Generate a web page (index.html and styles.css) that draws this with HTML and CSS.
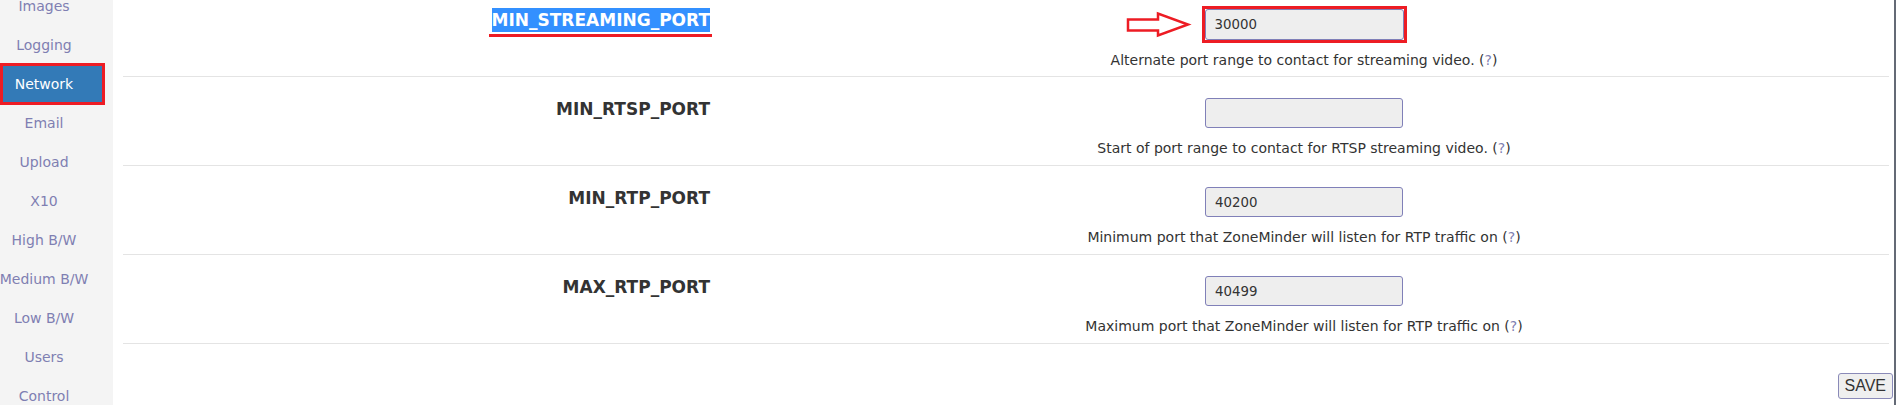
FILE: index.html
```html
<!DOCTYPE html>
<html>
<head>
<meta charset="utf-8">
<link rel="stylesheet" href="styles.css">
</head>
<body>
<div class="page">
  <nav class="sidebar">
    <ul class="nav">
      <li><a>Images</a></li>
      <li><a>Logging</a></li>
      <li><a class="active">Network</a></li>
      <li><a>Email</a></li>
      <li><a>Upload</a></li>
      <li><a>X10</a></li>
      <li><a>High B/W</a></li>
      <li><a>Medium B/W</a></li>
      <li><a>Low B/W</a></li>
      <li><a>Users</a></li>
      <li><a>Control</a></li>
    </ul>
  </nav>
  <main class="content">
    <div class="rows">
      <div class="row">
        <div class="label"><span class="selected">MIN_STREAMING_PORT</span></div>
        <div class="value">
          <div class="field boxed">
            <svg class="arrow" width="68" height="28" viewBox="0 0 68 28"><polygon points="3,9.5 33,9.5 33,3.5 63,14.5 33,25.5 33,20.5 3,20.5" fill="none" stroke="#ed1c24" stroke-width="2.5"/></svg>
            <input class="input" type="text" value="30000">
          </div>
          <div class="desc">Alternate port range to contact for streaming video. (<a class="help">?</a>)</div>
        </div>
      </div>
      <div class="row">
        <div class="label">MIN_RTSP_PORT</div>
        <div class="value">
          <div class="field"><input class="input" type="text" value=""></div>
          <div class="desc">Start of port range to contact for RTSP streaming video. (<a class="help">?</a>)</div>
        </div>
      </div>
      <div class="row">
        <div class="label">MIN_RTP_PORT</div>
        <div class="value">
          <div class="field"><input class="input" type="text" value="40200"></div>
          <div class="desc">Minimum port that ZoneMinder will listen for RTP traffic on (<a class="help">?</a>)</div>
        </div>
      </div>
      <div class="row">
        <div class="label">MAX_RTP_PORT</div>
        <div class="value">
          <div class="field"><input class="input" type="text" value="40499"></div>
          <div class="desc">Maximum port that ZoneMinder will listen for RTP traffic on (<a class="help">?</a>)</div>
        </div>
      </div>
    </div>
    <div class="actions"><button class="save" type="button">SAVE</button></div>
  </main>
</div>
</body>
</html>
```

FILE: styles.css
```css
html, body {
  margin: 0;
  padding: 0;
  height: 100%;
  overflow: hidden;
  background: #ffffff;
}

.page {
  display: flex;
  height: 405px;
  font-family: "DejaVu Sans", Verdana, sans-serif;
  color: #333333;
}

.sidebar {
  width: 113px;
  flex: none;
  background: #f4f4f4;
  overflow: hidden;
}

.nav {
  list-style: none;
  margin: -12px 0 0 0;
  padding: 0;
}

.nav li {
  margin: 0 0 3px 0;
}

.nav a {
  position: relative;
  display: flex;
  justify-content: center;
  align-items: center;
  box-sizing: border-box;
  width: 100px;
  height: 36px;
  margin-left: 2px;
  padding-right: 16px;
  white-space: nowrap;
  font-size: 14px;
  color: #7f7fb2;
}

.nav a.active {
  background: #337ab7;
  color: #ffffff;
}

.nav a.active::after {
  content: "";
  position: absolute;
  top: -3px;
  bottom: -3px;
  left: -2px;
  right: -3px;
  border: 3px solid #ed1c24;
}

.content {
  flex: 1;
  min-width: 0;
  padding-left: 10px;
  border-right: 2px solid #646a76;
}

.rows {
  margin: -12px 5px 0 0;
}

.row {
  display: grid;
  grid-template-columns: 596px 1fr;
  height: 88px;
  border-bottom: 1px solid #e4e4e4;
}

.label {
  text-align: right;
  padding: 20px 9px 0 0;
  font-size: 17px;
  font-weight: bold;
  line-height: 24px;
  color: #333333;
}

.selected {
  position: relative;
  display: inline-block;
  background: #3390ff;
  color: #ffffff;
}

.selected::after {
  content: "";
  position: absolute;
  left: -3px;
  right: -2px;
  top: 26px;
  height: 3px;
  background: #ed1c24;
}

.value {
  text-align: center;
  padding-top: 21px;
}

.field {
  position: relative;
  display: inline-block;
  vertical-align: top;
}

.field.boxed::after {
  content: "";
  position: absolute;
  top: -3px;
  left: -3px;
  right: -3px;
  bottom: -3px;
  border: 3px solid #ed1c24;
  pointer-events: none;
}

.arrow {
  position: absolute;
  left: -80px;
  top: 1px;
}

.input {
  display: block;
  box-sizing: border-box;
  width: 198px;
  height: 30px;
  margin: 0;
  padding: 0 9px;
  border: 1px solid #8080b8;
  border-radius: 3px;
  background: #eeeeee;
  font-family: "DejaVu Sans", Verdana, sans-serif;
  font-size: 13.33px;
  color: #333333;
}

.field.boxed .input {
  height: 31px;
  width: 199px;
}

.desc {
  margin-top: 10px;
  font-size: 14px;
  line-height: 20px;
  color: #333333;
}

.help {
  color: #7f7fb2;
}

.actions {
  display: flex;
  justify-content: flex-end;
  margin: 29px 1px 0 0;
}

.save {
  box-sizing: border-box;
  height: 26px;
  padding: 0 6px;
  border: 1px solid #8a8ab8;
  border-radius: 3px;
  background: #efefef;
  font-family: "Liberation Sans", Arial, sans-serif;
  font-size: 16px;
  color: #333333;
}
```
